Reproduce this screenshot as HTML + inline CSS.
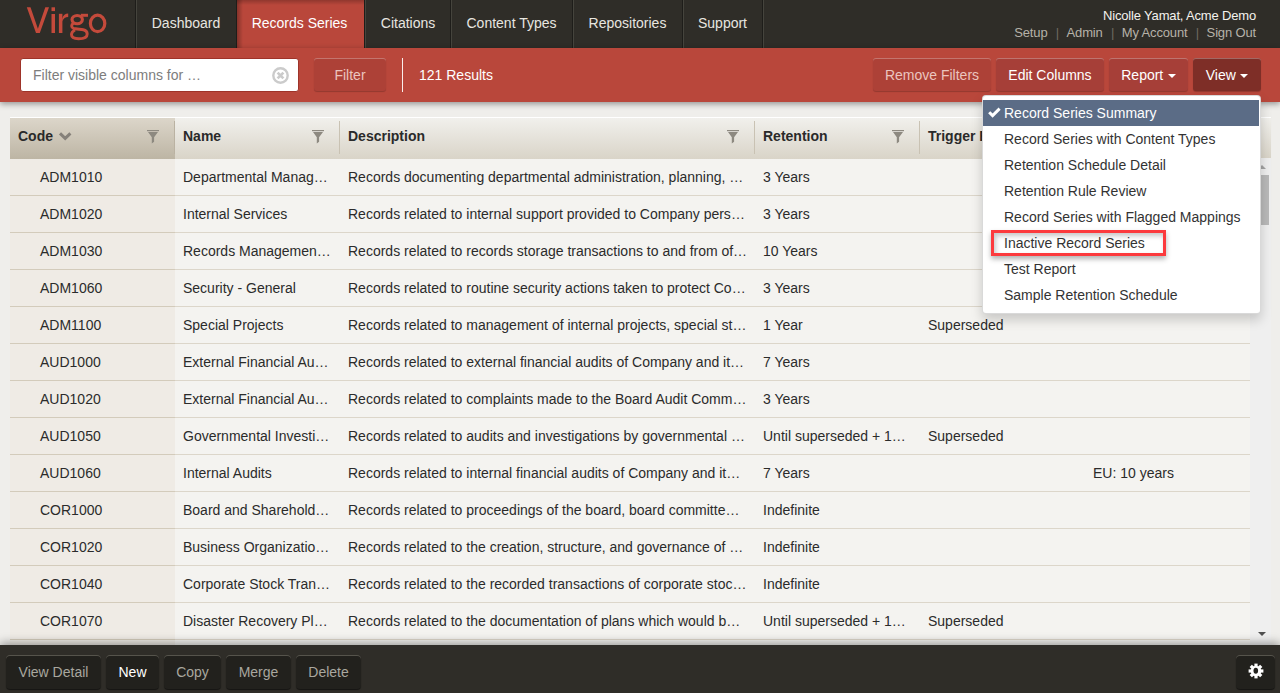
<!DOCTYPE html>
<html><head><meta charset="utf-8">
<style>
*{box-sizing:border-box;margin:0;padding:0}
html,body{width:1280px;height:693px;overflow:hidden;background:#efeeeb;font-family:"Liberation Sans",sans-serif;font-size:14px;color:#333}
#nav{position:absolute;left:0;top:0;width:1280px;height:48px;background:#2f2d28}

.tab{position:absolute;top:0;height:48px;line-height:46px;color:#e8e6e0;font-size:14px;text-align:center;border-left:1px solid #45443d;box-shadow:-1px 0 0 #1e1d1a;padding-right:2px}
.tab.active{background:linear-gradient(rgba(0,0,0,.22),rgba(0,0,0,0) 5px),linear-gradient(90deg,rgba(0,0,0,.28),rgba(0,0,0,0) 6px),#b9473b;color:#fff;border-left:none}
#user{position:absolute;right:24px;top:8px;color:#f4f2ee;font-size:13px;text-align:right;letter-spacing:-0.17px}
#links{position:absolute;right:24px;top:25px;color:#b6b2a8;font-size:13px;text-align:right;white-space:nowrap;letter-spacing:-0.15px}
#links .sep{color:#6e6a60;margin:0 7.7px 0 8.2px}
#bar{position:absolute;left:0;top:48px;width:1280px;height:54px;background:#b9473b;box-shadow:0 2px 6px rgba(0,0,0,.38)}
#filt{position:absolute;left:20px;top:58px;width:279px;height:34px;background:#fff;border-radius:3px;border:1px solid #9e3329}
#filt span{position:absolute;left:12px;top:8px;color:#7d7d7d;font-size:14px}
#filt svg{position:absolute;left:251px;top:8px}
.rbtn{position:absolute;top:58px;height:33px;line-height:35px;border-radius:3px;font-size:14px;text-align:center;background:#a63f38;color:#fff;box-shadow:inset 0 1px 0 rgba(255,255,255,.28),0 1px 1px rgba(0,0,0,.2)}
.caret{display:inline-block;width:0;height:0;border-left:4px solid transparent;border-right:4px solid transparent;border-top:4px solid #fff;vertical-align:middle;margin-left:4.5px;margin-top:-1px}
#vsep{position:absolute;left:402px;top:58px;width:1px;height:34px;background:#fbeeec}
#results{position:absolute;left:419px;top:67px;color:#fff;font-size:14px}
#tablewrap{position:absolute;left:10px;top:117px;width:1261px;height:528px;overflow:hidden}
#thead{position:absolute;left:0;top:0;width:1261px;height:42px;border-top:1px solid #ffffff;background:linear-gradient(#f1f0ec,#d9d4c8)}
#thead .h{position:absolute;top:0;height:41px;line-height:36px;font-weight:bold;color:#2a2a2a;padding-left:8px;white-space:nowrap;overflow:hidden}
#thead .h.sorted{background:linear-gradient(#dcd6ca,#bdb5a4)}
#thead .sep{position:absolute;top:3px;width:1px;height:33px;background:#c9c2b3}
.fun{position:absolute;top:12px}
.chev{position:absolute;left:49px;top:14px;overflow:visible}
#tbody{position:absolute;left:0;top:41px;width:1240px}
table{border-collapse:collapse;table-layout:fixed;width:1240px}
td{height:37px;border-bottom:1px solid #dcd6ca;padding:0 8px 0 8px;white-space:nowrap;overflow:hidden;text-overflow:ellipsis;background:#f4f3f0;color:#2b2b2b;font-size:14px}
td.c{background:#efebe5;padding-left:30px;border-bottom-color:#d3cbbb}
tr:first-child td{padding-top:2px}
#sb{position:absolute;left:1240px;top:41px;width:21px;height:487px;background:#efefef}
#thumb{position:absolute;left:1246px;top:58px;width:13px;height:50px;background:#b9b9b9}
.sarr{position:absolute;width:0;height:0;border-left:4px solid transparent;border-right:4px solid transparent}
#foot{position:absolute;left:0;top:645px;width:1280px;height:48px;background:#2f2d28;box-shadow:0 -2px 9px rgba(0,0,0,.38)}
.fbtn{position:absolute;top:10px;height:34px;line-height:35px;border-radius:4px;background:#22211d;color:#a9a79f;text-align:center;font-size:14px;box-shadow:inset 0 1px 0 #56544c,0 1px 1px rgba(0,0,0,.55)}
#dd{position:absolute;left:982px;top:95px;width:279px;height:219px;background:#fff;border-radius:4px;box-shadow:0 6px 12px rgba(0,0,0,.175);border:1px solid rgba(0,0,0,.15)}
#dd .it{position:absolute;left:0;width:276px;height:26px;line-height:26px;padding-left:21px;color:#333;font-size:14px;white-space:nowrap}
#dd .it.sel{background:#5b6c86;color:#fff}
#dd .it svg{position:absolute;left:5px;top:7px}
#hl{position:absolute;left:991px;top:230px;width:175px;height:26px;border:3px solid #fc3a3d;box-shadow:0 3px 5px rgba(0,0,0,.3),inset 2px 3px 5px rgba(0,0,0,.22)}
</style></head><body>
<div id="nav">
  <svg id="logo" width="90" height="46" viewBox="0 0 90 46" style="position:absolute;left:20px;top:0"><g transform="translate(-20 0)" fill="#c44a3b" stroke="none">
<path d="M26.8 7.3 H30.5 L37.9 28.8 L45.3 7.3 H49.0 L39.8 33 H36.0 Z"/>
<rect x="51.5" y="7.3" width="3.5" height="3.8"/>
<rect x="51.5" y="14" width="3.5" height="19"/>
<rect x="58.9" y="13.8" width="3.5" height="19.2"/>
<path d="M62.2 18.6 C63.2 15 65.2 13.6 68.2 13.6 V17.0 C65.4 17.0 63.4 18.4 62.2 21.6 Z"/>
</g>
<g transform="translate(-20 0)" fill="none" stroke="#c44a3b">
<ellipse cx="77.2" cy="19.6" rx="5.2" ry="4.1" stroke-width="3.1"/>
<path d="M80.8 15.3 H88" stroke-width="3.0"/>
<path d="M73.4 23.2 C71.2 24.6 70.9 27.3 73.6 28.4 C75.5 29.1 80.5 29.2 83.3 29.7 C86.6 30.3 87.2 32.2 87.2 34 C87.2 37.2 83.6 38.8 78.6 38.8 C73.8 38.8 71.5 37.1 71.5 34.6 C71.5 32.6 72.8 31.1 75 30" stroke-width="2.9"/>
<ellipse cx="97.6" cy="23.45" rx="7.2" ry="8.25" stroke-width="3.2"/>
</g></svg>
  <div class="tab" style="left:136px;width:101px">Dashboard</div>
  <div class="tab active" style="left:237px;width:127px">Records Series</div>
  <div class="tab" style="left:365px;width:87px">Citations</div>
  <div class="tab" style="left:451px;width:122px">Content Types</div>
  <div class="tab" style="left:573px;width:110px">Repositories</div>
  <div class="tab" style="left:683px;width:80px">Support</div><div class="tab" style="left:763px;width:1px"></div>
  <div id="user">Nicolle Yamat, Acme Demo</div>
  <div id="links">Setup<span class="sep">|</span>Admin<span class="sep">|</span>My Account<span class="sep">|</span>Sign Out</div>
</div>
<div id="bar"></div>
<div id="filt"><span>Filter visible columns for …</span><svg width="17" height="17" viewBox="0 0 17 17"><circle cx="8.5" cy="8.5" r="7.2" fill="none" stroke="#cbcbcb" stroke-width="2.4"/><path d="M5.6 5.6 L11.4 11.4 M11.4 5.6 L5.6 11.4" stroke="#cbcbcb" stroke-width="2.7"/></svg></div>
<div class="rbtn" style="left:314px;width:72px;color:#ebc5bf;background:#ad4137">Filter</div>
<div id="vsep"></div>
<div id="results">121 Results</div>
<div class="rbtn" style="left:873px;width:118px;color:#ebc5bf;background:#ad4137">Remove Filters</div>
<div class="rbtn" style="left:996px;width:108px">Edit Columns</div>
<div class="rbtn" style="left:1109px;width:79px">Report<span class="caret"></span></div>
<div class="rbtn" style="left:1193px;width:68px;background:#7e2e27">View<span class="caret"></span></div>
<div id="tablewrap">
 <div id="tbody"><table>
 <colgroup><col style="width:165px"><col style="width:165px"><col style="width:415px"><col style="width:165px"><col style="width:165px"><col style="width:165px"></colgroup>
<tr><td class="c">ADM1010</td><td>Departmental Management</td><td>Records documenting departmental administration, planning, and general operations of the department</td><td>3 Years</td><td></td><td></td></tr>
<tr><td class="c">ADM1020</td><td>Internal Services</td><td>Records related to internal support provided to Company personnel and departments</td><td>3 Years</td><td></td><td></td></tr>
<tr><td class="c">ADM1030</td><td>Records Management Program</td><td>Records related to records storage transactions to and from offsite storage</td><td>10 Years</td><td></td><td></td></tr>
<tr><td class="c">ADM1060</td><td>Security - General</td><td>Records related to routine security actions taken to protect Company property</td><td>3 Years</td><td></td><td></td></tr>
<tr><td class="c">ADM1100</td><td>Special Projects</td><td>Records related to management of internal projects, special studies</td><td>1 Year</td><td>Superseded</td><td></td></tr>
<tr><td class="c">AUD1000</td><td>External Financial Audits</td><td>Records related to external financial audits of Company and its subsidiaries</td><td>7 Years</td><td></td><td></td></tr>
<tr><td class="c">AUD1020</td><td>External Financial Audit Complaints</td><td>Records related to complaints made to the Board Audit Committee</td><td>3 Years</td><td></td><td></td></tr>
<tr><td class="c">AUD1050</td><td>Governmental Investigations</td><td>Records related to audits and investigations by governmental agencies</td><td>Until superseded + 10 Years</td><td>Superseded</td><td></td></tr>
<tr><td class="c">AUD1060</td><td>Internal Audits</td><td>Records related to internal financial audits of Company and its subsidiaries</td><td>7 Years</td><td></td><td>EU: 10 years</td></tr>
<tr><td class="c">COR1000</td><td>Board and Shareholder Meetings</td><td>Records related to proceedings of the board, board committees and shareholders</td><td>Indefinite</td><td></td><td></td></tr>
<tr><td class="c">COR1020</td><td>Business Organization and Governance</td><td>Records related to the creation, structure, and governance of the Company</td><td>Indefinite</td><td></td><td></td></tr>
<tr><td class="c">COR1040</td><td>Corporate Stock Transactions</td><td>Records related to the recorded transactions of corporate stock and equity</td><td>Indefinite</td><td></td><td></td></tr>
<tr><td class="c">COR1070</td><td>Disaster Recovery Plans</td><td>Records related to the documentation of plans which would be used in disaster</td><td>Until superseded + 10 Years</td><td>Superseded</td><td></td></tr>
<tr><td class="c">COR1100</td><td>Legal Entity Management</td><td>Records related to legal entity formation and dissolution</td><td>Indefinite</td><td></td><td></td></tr>
 </table></div>
 <div id="thead">
  <div class="h sorted" style="left:0;width:165px">Code</div>
  <div class="h" style="left:165px;width:165px">Name</div>
  <div class="h" style="left:330px;width:415px">Description</div>
  <div class="h" style="left:745px;width:165px">Retention</div>
  <div class="h" style="left:910px;width:165px">Trigger Event</div>
  <div class="h" style="left:1075px;width:186px"></div>
  <div class="sep" style="left:164px;background:#bab2a2"></div>
  <div class="sep" style="left:329px"></div>
  <div class="sep" style="left:744px"></div>
  <div class="sep" style="left:909px"></div>
  <svg class="chev" width="12" height="8" viewBox="0 0 12 8"><path d="M1 1.4 L6.2 6.4 L11.4 1.4" fill="none" stroke="#86817a" stroke-width="3"/></svg>
  <svg class="fun" style="left:137px" width="12" height="14" viewBox="0 0 12 14"><rect x="0" y="0" width="12" height="1.2" fill="#8d8980"/><path d="M1 2 H11 L7.1 7.2 V11.8 L4.8 13.6 V7.2 Z" fill="#8d8980"/></svg><svg class="fun" style="left:302px" width="12" height="14" viewBox="0 0 12 14"><rect x="0" y="0" width="12" height="1.2" fill="#8d8980"/><path d="M1 2 H11 L7.1 7.2 V11.8 L4.8 13.6 V7.2 Z" fill="#8d8980"/></svg><svg class="fun" style="left:717px" width="12" height="14" viewBox="0 0 12 14"><rect x="0" y="0" width="12" height="1.2" fill="#8d8980"/><path d="M1 2 H11 L7.1 7.2 V11.8 L4.8 13.6 V7.2 Z" fill="#8d8980"/></svg><svg class="fun" style="left:882px" width="12" height="14" viewBox="0 0 12 14"><rect x="0" y="0" width="12" height="1.2" fill="#8d8980"/><path d="M1 2 H11 L7.1 7.2 V11.8 L4.8 13.6 V7.2 Z" fill="#8d8980"/></svg>
 </div>
 <div id="sb"></div>
 <div id="thumb"></div>
 <div class="sarr" style="left:1248px;top:48px;border-bottom:4px solid #a3a3a3"></div>
 <div class="sarr" style="left:1248px;top:515px;border-top:4px solid #505050"></div>
</div>
<div id="foot">
 <div class="fbtn" style="left:6px;width:95px">View Detail</div>
 <div class="fbtn" style="left:106px;width:53px;color:#fff">New</div>
 <div class="fbtn" style="left:164px;width:57px">Copy</div>
 <div class="fbtn" style="left:226px;width:65px">Merge</div>
 <div class="fbtn" style="left:296px;width:65px">Delete</div>
 <div class="fbtn" style="left:1236px;width:39px"><svg width="16" height="16" viewBox="0 0 16 16" style="position:absolute;left:12px;top:8px"><g fill="#fff" transform="translate(8 8)"><circle r="5.3"/><rect x="-1.6" y="-7.4" width="3.2" height="3.4" transform="rotate(0)"/><rect x="-1.6" y="-7.4" width="3.2" height="3.4" transform="rotate(45)"/><rect x="-1.6" y="-7.4" width="3.2" height="3.4" transform="rotate(90)"/><rect x="-1.6" y="-7.4" width="3.2" height="3.4" transform="rotate(135)"/><rect x="-1.6" y="-7.4" width="3.2" height="3.4" transform="rotate(180)"/><rect x="-1.6" y="-7.4" width="3.2" height="3.4" transform="rotate(225)"/><rect x="-1.6" y="-7.4" width="3.2" height="3.4" transform="rotate(270)"/><rect x="-1.6" y="-7.4" width="3.2" height="3.4" transform="rotate(315)"/></g><ellipse cx="7.8" cy="7.8" rx="2.3" ry="3" fill="#22211d"/></svg></div>
</div>
<div id="dd">
 <div class="it sel" style="top:4px"><svg width="13" height="11" viewBox="0 0 13 11"><path d="M1.2 5.2 L4.6 8.6 L11.6 1.6" fill="none" stroke="#fff" stroke-width="3"/></svg>Record Series Summary</div>
 <div class="it" style="top:30px">Record Series with Content Types</div>
 <div class="it" style="top:56px">Retention Schedule Detail</div>
 <div class="it" style="top:82px">Retention Rule Review</div>
 <div class="it" style="top:108px">Record Series with Flagged Mappings</div>
 <div class="it" style="top:134px">Inactive Record Series</div>
 <div class="it" style="top:160px">Test Report</div>
 <div class="it" style="top:186px">Sample Retention Schedule</div>
</div>
<div id="hl"></div>
</body></html>
